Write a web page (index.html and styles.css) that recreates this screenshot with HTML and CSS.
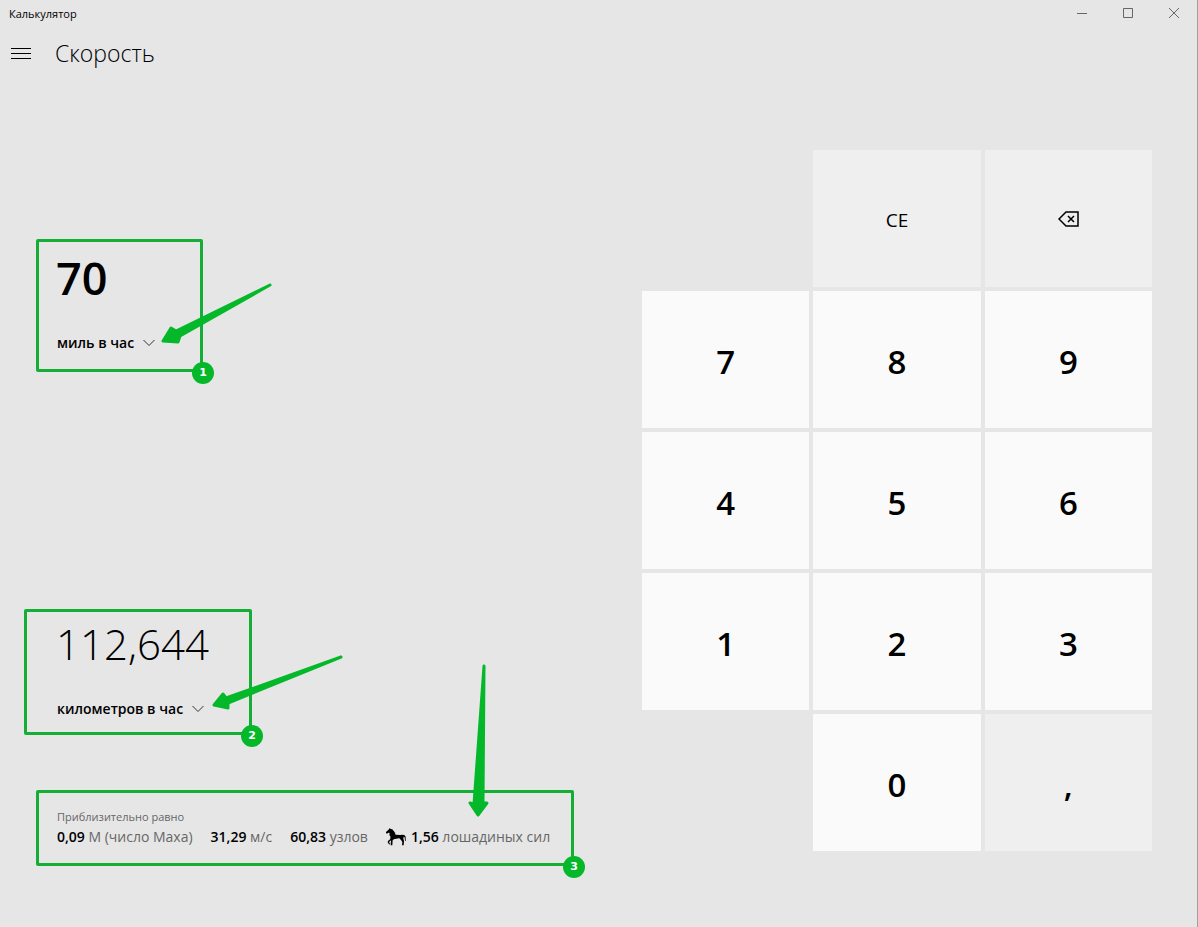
FILE: index.html
```html
<!DOCTYPE html>
<html lang="ru">
<head>
<meta charset="utf-8">
<title>Калькулятор</title>
<link rel="stylesheet" href="styles.css">
</head>
<body>
<div class="window">
  <header class="titlebar">
    <span class="app-name">Калькулятор</span>
    <div class="window-controls">
      <button type="button" class="window-button" aria-label="Свернуть"><svg width="12" height="12" viewBox="0 0 12 12"><path d="M1 6.5H11"/></svg></button>
      <button type="button" class="window-button" aria-label="Развернуть"><svg width="12" height="12" viewBox="0 0 12 12"><path d="M1.5 1.5H10.5V10.5H1.5Z"/></svg></button>
      <button type="button" class="window-button" aria-label="Закрыть"><svg width="12" height="12" viewBox="0 0 12 12"><path d="M1 1L11 11M11 1L1 11"/></svg></button>
    </div>
  </header>
  <div class="mode-bar">
    <button type="button" class="menu-button" aria-label="Меню"><svg width="20" height="12" viewBox="0 0 20 12"><path d="M0 .5H20M0 5.5H20M0 10.5H20"/></svg></button>
    <h1 class="mode-name">Скорость</h1>
  </div>
  <main class="converter">
    <div class="values">
      <section class="source">
        <div class="amount amount-active">70</div>
        <label class="unit">
          <select aria-label="Исходная единица"><option>миль в час</option></select>
          <svg class="chevron" width="12" height="10" viewBox="0 0 12 10"><path d="M.5 3L6 8.5L11.5 3"/></svg>
        </label>
        <div class="callout callout-source"><span class="badge">1</span></div>
        <svg class="arrow" width="300" height="120" viewBox="0 0 300 120"><path d="M214 39L120 85L115 82L107 95L122 96L124 90Z"/></svg>
      </section>
      <section class="target">
        <div class="amount amount-result">112,644</div>
        <label class="unit">
          <select aria-label="Итоговая единица"><option>километров в час</option></select>
          <svg class="chevron" width="12" height="10" viewBox="0 0 12 10"><path d="M.5 3L6 8.5L11.5 3"/></svg>
        </label>
        <div class="callout callout-target"><span class="badge">2</span></div>
        <svg class="arrow" width="300" height="120" viewBox="0 0 300 120"><path d="M285 45L170 86L167 82L158 93L172 96L172 91Z"/></svg>
      </section>
      <section class="approx">
        <h2 class="approx-title">Приблизительно равно</h2>
        <ul class="approx-list">
          <li><b>0,09</b> М (число Маха)</li>
          <li><b>31,29</b> м/с</li>
          <li><b>60,83</b> узлов</li>
          <li class="horse-item"><svg class="horse" width="20" height="18" viewBox="0 0 60 54"><path d="M0 12L9 4L11 0L14 3L19 4L22 8L25 9L24 12L28 14L27 18L30 20L43 21L48 20L55 21L59 26L59 39L57 39L56 28L53 26L52 32L54 39L53 52L48 52L49 42L45 36L40 31L26 33L20 36L19 52L14 52L15 37L9 42L12 47L10 50L5 43L6 39L13 33L13 25L10 22L11 15L7 14L3 17L0 15Z"/></svg><span><b>1,56</b> лошадиных сил</span></li>
        </ul>
        <div class="callout callout-approx"><span class="badge">3</span></div>
        <svg class="arrow" width="500" height="40" viewBox="0 0 500 40"><path d="M428 -138L427 -1L431 -1L422 11L414 -1L418 0Z"/></svg>
      </section>
    </div>
    <div class="keypad">
      <button type="button" class="key key-function key-ce">CE</button>
      <button type="button" class="key key-function key-erase" aria-label="Стереть"><svg width="21" height="16" viewBox="0 0 21 16"><path d="M8 1H20V15H8L1 8ZM10 5L16 11M16 5L10 11"/></svg></button>
      <button type="button" class="key key-row-start">7</button>
      <button type="button" class="key">8</button>
      <button type="button" class="key">9</button>
      <button type="button" class="key">4</button>
      <button type="button" class="key">5</button>
      <button type="button" class="key">6</button>
      <button type="button" class="key">1</button>
      <button type="button" class="key">2</button>
      <button type="button" class="key">3</button>
      <button type="button" class="key key-zero">0</button>
      <button type="button" class="key key-function">,</button>
    </div>
  </main>
</div>
</body>
</html>
```
FILE: styles.css
```css
* { box-sizing: border-box; }

body {
  margin: 0;
  background: #e6e6e6;
  color: #000;
  font-family: "Open Sans", "Noto Sans", sans-serif;
}

button, select { font-family: inherit; color: inherit; border: 0; border-radius: 0; padding: 0; margin: 0; }
button { background: none; }
svg { display: block; fill: none; stroke: #000; }

.window {
  display: flex;
  flex-direction: column;
  min-height: 100vh;
  border-right: 1px solid #a0a0a0;
}

.titlebar {
  display: flex;
  justify-content: space-between;
  height: 28px;
  padding-left: 9px;
}
.app-name { font-size: 11px; line-height: 28px; }
.window-controls { display: flex; }
.window-button { display: grid; place-items: center; width: 46px; height: 26px; }
.window-button svg { stroke: #666; }

.mode-bar { display: flex; align-items: center; height: 52px; padding-left: 11px; gap: 24px; }
.menu-button { display: grid; place-items: center; width: 20px; height: 40px; }
.mode-name { margin: 0; padding-bottom: 3px; font-size: 23px; line-height: 32px; font-weight: 300; }

.converter {
  flex: 1;
  display: grid;
  grid-template-columns: 642fr 510fr;
  padding: 0 45px 76px 0;
}

.values { display: flex; flex-direction: column; padding: 166px 0 0 56px; }
.source, .target, .approx { position: relative; }
.source { flex: 366 0 0; }
.target { flex: 192 0 0; }
.approx { flex: 47 0 0; }

.amount { line-height: 64px; }
.amount-active { font-size: 45px; font-weight: 600; }
.amount-result { font-size: 42px; font-weight: 300; }
.unit { display: flex; align-items: center; gap: 8px; margin-top: 20px; padding-left: 1px; }
.unit select {
  appearance: none;
  background: none;
  font-size: 14px;
  font-weight: 600;
  height: 24px;
}
.chevron { stroke: #333; }

.approx-title,
.approx-list { margin: 0; padding: 0 0 0 1px; color: #666; }
.approx-title { padding-top: 4px; font-size: 11px; line-height: 18px; font-weight: 400; }
.approx-list {
  display: flex;
  gap: 18px;
  list-style: none;
  font-size: 14px;
  line-height: 22px;
  white-space: nowrap;
}
.approx-list b { font-weight: 600; color: #000; }
.horse-item { display: flex; align-items: center; gap: 5px; }
.horse { fill: #000; stroke: none; }

.callout { position: absolute; border: 3px solid #14ad35; border-radius: 2px; pointer-events: none; }
.callout-source { left: -20px; top: -7px; width: 167px; height: 133px; }
.callout-target { left: -32px; top: -3px; width: 228px; height: 126px; }
.callout-approx { left: -20px; top: -14px; width: 538px; height: 76px; }
.badge {
  position: absolute;
  right: -14px;
  bottom: -15px;
  width: 22px;
  height: 22px;
  border-radius: 50%;
  background: #04b82a;
  color: #fff;
  font: bold 11px/22px "DejaVu Sans", sans-serif;
  text-align: center;
}
.arrow {
  position: absolute;
  left: 0;
  top: 0;
  overflow: visible;
  pointer-events: none;
  fill: #04b82a;
  stroke: #04b82a;
  stroke-width: 3;
  stroke-linejoin: round;
}

.keypad {
  display: grid;
  grid-template-columns: repeat(3, 1fr);
  grid-template-rows: repeat(5, 1fr);
  gap: 4px;
  padding-top: 70px;
}
.key { display: grid; place-items: center; padding-top: 3px; background: #fafafa; font-size: 33px; font-weight: 600; }
.key-function { background: #efefef; }
.key-ce { grid-column: 2; font-size: 19px; font-weight: 400; }
.key-erase { padding-top: 0; }
.key-row-start { grid-column: 1; }
.key-zero { grid-column: 2; }
.key svg { stroke-width: 1.5; }
```
